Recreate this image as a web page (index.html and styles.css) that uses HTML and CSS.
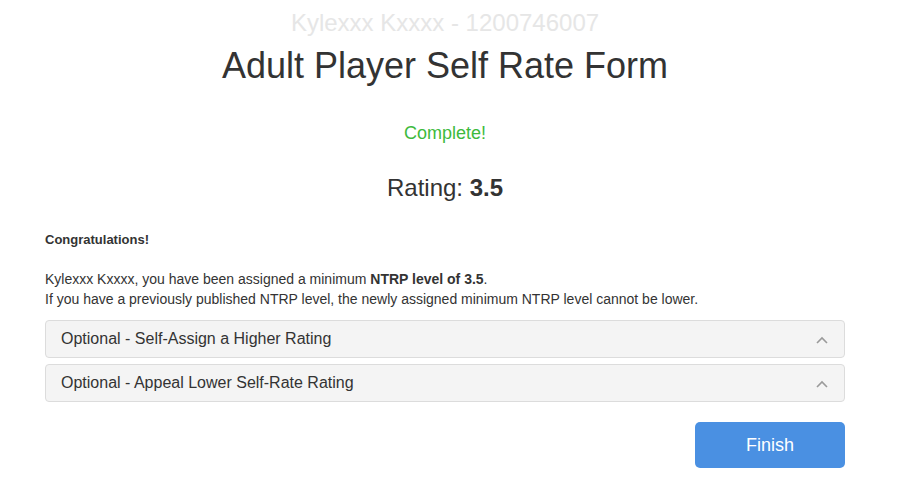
FILE: index.html
```html
<!DOCTYPE html>
<html>
<head>
<meta charset="utf-8">
<link rel="stylesheet" href="styles.css">
</head>
<body>
<div class="page">
  <div class="player">Kylexxx Kxxxx - 1200746007</div>
  <h1 class="title">Adult Player Self Rate Form</h1>
  <div class="status">Complete!</div>
  <div class="rating">Rating: <b>3.5</b></div>
  <div class="congrats">Congratulations!</div>
  <p class="message">Kylexxx Kxxxx, you have been assigned a minimum <b>NTRP level of 3.5</b>.<br>If you have a previously published NTRP level, the newly assigned minimum NTRP level cannot be lower.</p>
  <div class="panel">
    <span>Optional - Self-Assign a Higher Rating</span>
    <svg class="chev" width="12" height="8" viewBox="0 0 12 8"><path d="M1 7 L6 2 L11 7" fill="none" stroke="#9a9a9a" stroke-width="1.6"/></svg>
  </div>
  <div class="panel">
    <span>Optional - Appeal Lower Self-Rate Rating</span>
    <svg class="chev" width="12" height="8" viewBox="0 0 12 8"><path d="M1 7 L6 2 L11 7" fill="none" stroke="#9a9a9a" stroke-width="1.6"/></svg>
  </div>
  <div class="actions">
    <button class="finish">Finish</button>
  </div>
</div>
</body>
</html>
```
FILE: styles.css
```css
html, body {
  margin: 0;
  padding: 0;
  background: #fff;
}
body {
  font-family: "Liberation Sans", Arial, sans-serif;
  color: #333;
}
.page {
  width: 800px;
  margin-left: 45px;
  display: flex;
  flex-direction: column;
}
.player {
  text-align: center;
  font-size: 24px;
  color: #e6e6e6;
  line-height: 26px;
  margin-top: 10px;
}
.title {
  text-align: center;
  font-size: 36px;
  font-weight: normal;
  color: #333;
  margin: 10px 0 0;
  line-height: 40px;
}
.status {
  text-align: center;
  color: #3dba3d;
  font-size: 18px;
  line-height: 20px;
  margin-top: 37px;
}
.rating {
  text-align: center;
  font-size: 24px;
  line-height: 26px;
  margin-top: 32px;
}
.rating b {
  font-weight: bold;
}
.congrats {
  font-size: 13px;
  font-weight: bold;
  margin-top: 31px;
  line-height: 16px;
}
.message {
  font-size: 14px;
  line-height: 20px;
  margin: 21px 0 11px;
}
.panel {
  display: flex;
  align-items: center;
  justify-content: space-between;
  height: 36px;
  background: #f4f4f4;
  border: 1px solid #dcdcdc;
  border-radius: 4px;
  padding: 0 16px 0 15px;
  font-size: 16px;
  color: #333;
  margin-bottom: 6px;
}
.chev {
  margin-top: 2px;
}
.actions {
  display: flex;
  justify-content: flex-end;
  margin-top: 14px;
}
.finish {
  width: 150px;
  height: 46px;
  background: #4a90e2;
  border: none;
  border-radius: 5px;
  color: #fff;
  font-family: "Liberation Sans", Arial, sans-serif;
  font-size: 18px;
}
```
